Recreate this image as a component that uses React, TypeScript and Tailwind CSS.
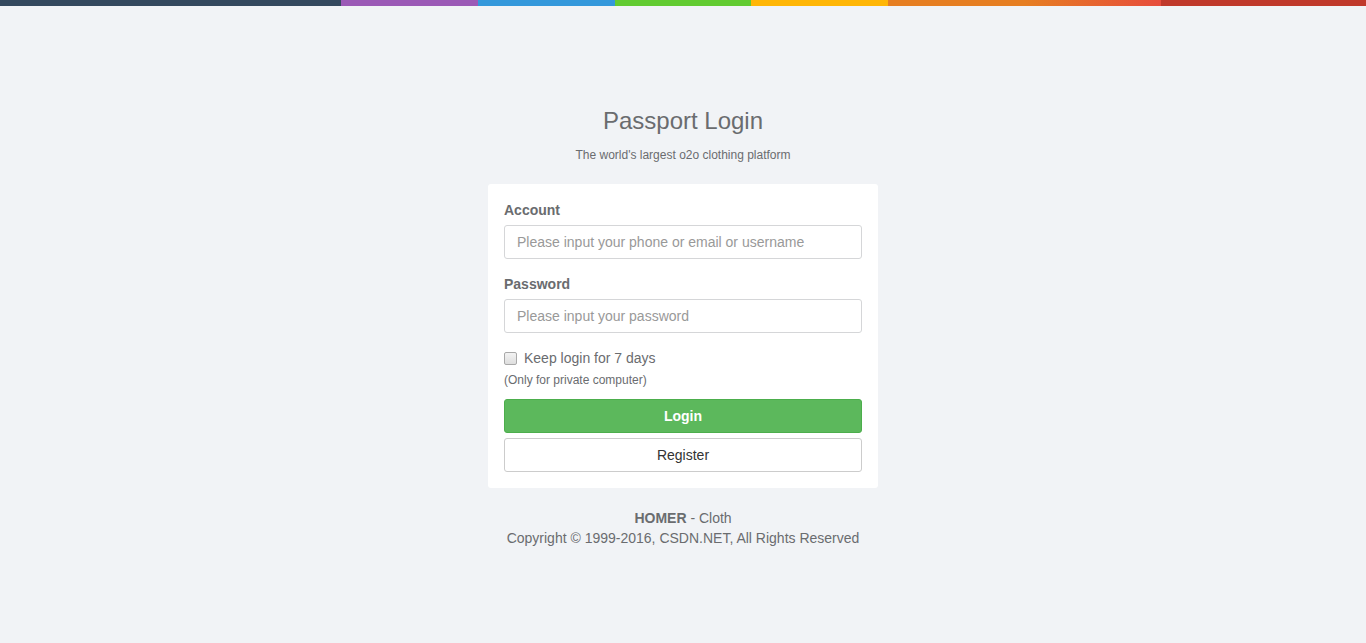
import React from "react";

export default function App() {
  return (
    <div className="min-h-[643px] bg-[#f1f3f6] font-['Liberation_Sans',Arial,sans-serif] text-[#6a6c6f]">
      <div className="h-[6px] bg-[linear-gradient(to_right,#34495e,#34495e_25%,#9b59b6_25%,#9b59b6_35%,#3498db_35%,#3498db_45%,#62cb31_45%,#62cb31_55%,#ffb606_55%,#ffb606_65%,#e67e22_65%,#e67e22_75%,#e74c3c_85%,#e74c3c_85%,#c0392b_85%,#c0392b_100%)]" />
      <div className="mx-auto w-[390px] pt-[102px]">
        <div className="text-center">
          <h3 className="text-[24px] leading-[26px] font-normal text-[#6a6c6f]">Passport Login</h3>
          <p className="mt-[13px] text-[12px] leading-[16px] text-[#6a6c6f]">The world's largest o2o clothing platform</p>
        </div>
        <div className="mt-[21px] rounded-[3px] bg-white p-[16px]">
          <form onSubmit={(e) => e.preventDefault()}>
            <div className="mb-[15px]">
              <label className="mb-[5px] block text-[14px] font-bold leading-[20px]">Account</label>
              <input
                type="text"
                placeholder="Please input your phone or email or username"
                className="block h-[34px] w-full rounded-[3px] border border-[#d5d6d8] bg-white px-[12px] text-[14px] text-[#555] placeholder:text-[#999] outline-none"
              />
            </div>
            <div className="mb-[15px]">
              <label className="mb-[5px] block text-[14px] font-bold leading-[20px]">Password</label>
              <input
                type="password"
                placeholder="Please input your password"
                className="block h-[34px] w-full rounded-[3px] border border-[#d5d6d8] bg-white px-[12px] text-[14px] text-[#555] placeholder:text-[#999] outline-none"
              />
            </div>
            <div className="flex h-[20px] items-center text-[14px] leading-[20px]">
              <span className="mr-[7px] inline-block h-[13px] w-[13px] rounded-[2px] border border-[#a9a9a9] bg-[linear-gradient(#f3f3f3,#dedede)]" />
              <span>Keep login for 7 days</span>
            </div>
            <p className="mt-[4px] text-[12px] leading-[17px] text-[#6a6c6f]">(Only for private computer)</p>
            <button className="mt-[10px] block h-[34px] w-full rounded-[3px] border border-[#4cae4c] bg-[#5cb85c] text-[14px] font-bold text-white">
              Login
            </button>
            <button className="mt-[5px] block h-[34px] w-full rounded-[3px] border border-[#ccc] bg-white text-[14px] text-[#333]">
              Register
            </button>
          </form>
        </div>
        <div className="mt-[20px] text-center text-[14px] leading-[20px]">
          <div>
            <strong>HOMER</strong> - Cloth
          </div>
          <div>Copyright © 1999-2016, CSDN.NET, All Rights Reserved</div>
        </div>
      </div>
    </div>
  );
}
